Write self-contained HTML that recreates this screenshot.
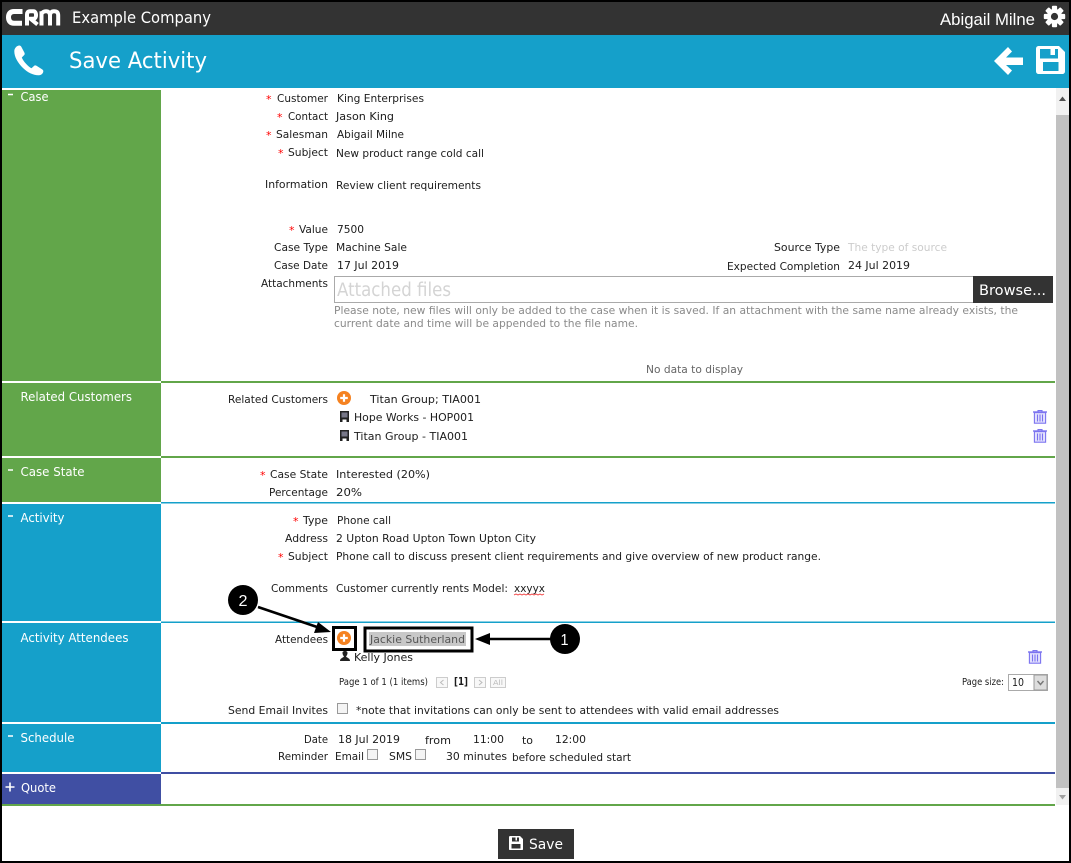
<!DOCTYPE html>
<html><head><meta charset="utf-8"><title>Save Activity</title>
<style>
html,body{margin:0;padding:0;background:#fff;width:1071px;height:863px;overflow:hidden}
svg{display:block}
text{font-family:"DejaVu Sans",sans-serif;font-size:11px;fill:#1c1c1c}
.s text{fill:#fff;font-size:12px}
.r{fill:#f00;font-size:11px}
</style></head><body>
<svg xmlns="http://www.w3.org/2000/svg" width="1071" height="863" viewBox="0 0 1071 863">
<defs>
<g id="plus"><circle r="7" fill="#f58220"/><path d="M-3.8 0H3.8M0-3.8V3.8" stroke="#fff" stroke-width="2.2"/></g>
<g id="trash" fill="none" stroke="#7b73f0" stroke-width="1.1"><path d="M0 2H14" stroke-width="1.4"/><path d="M5 2V.6H9V2"/><rect x="1.4" y="2.6" width="11.2" height="10.6" fill="#e3e1fd"/><path d="M4.500 4.500V11.500M7 4.500V11.500M9.500 4.500V11.500"/></g>
<g id="bld" fill="#222"><path d="M0 0H9V11H6.500V8.500H2.500V11H0Z"/><path d="M1.500 1.500H7.500V6.500H1.500Z" fill="#778"/></g>
<g id="cb"><rect x=".5" y=".5" width="10" height="10" fill="#f4f4f4" stroke="#999"/></g>
</defs>

<rect width="1071" height="863" fill="#000"/>
<rect x="2" y="2" width="1067" height="859" fill="#fff"/>
<rect x="2" y="2" width="1067" height="33" fill="#333"/>
<rect x="2" y="35" width="1067" height="53" fill="#15a0ca"/>

<!-- logo -->
<g fill="none" stroke="#fff" aria-label="CRM"><title>CRM</title>
<path d="M22.500 11.500H14C10 11.500 8.500 14 8.500 17.300S10 23.200 14 23.200H22" stroke-width="5"/>
<path d="M27 25.500V14.500C27 12.500 28 11.300 30 11.300H33.500C36.800 11.300 37 18.800 33.500 18.800H30.500L37.500 24.500" stroke-width="4"/>
<path d="M41.500 25.500V11.300M41.500 14C42.500 12 44 11.300 46 11.300C48.500 11.300 50 12.800 50 15.500V25.500M50 15.500C50 12.800 51.500 11.300 54 11.300C57 11.300 58.200 12.800 58.200 15.500V25.500" stroke-width="4"/>
</g>
<text x="72" y="23" textLength="139" lengthAdjust="spacingAndGlyphs" style="font-size:16px;fill:#fff">Example Company</text>
<text x="940" y="25" textLength="95" lengthAdjust="spacingAndGlyphs" style="font:16.500px 'Liberation Sans',sans-serif;fill:#fff">Abigail Milne</text>
<!-- gear -->
<g transform="translate(1054.500 16.500)"><g fill="#fff">
<circle r="7.600"/><rect x="-2.600" y="-10.700" width="5.200" height="21.400" rx="1"/><rect x="-2.600" y="-10.700" width="5.200" height="21.400" rx="1" transform="rotate(45)"/><rect x="-2.600" y="-10.700" width="5.200" height="21.400" rx="1" transform="rotate(90)"/><rect x="-2.600" y="-10.700" width="5.200" height="21.400" rx="1" transform="rotate(135)"/></g>
<circle r="3.600" fill="#333"/></g>

<!-- header -->
<path d="M19 45.500C16.500 46 14.500 48 14.300 51C14.200 57 18 63 23 68C28 73 34 75.500 39 75.200C41.500 75 43 73.500 43.300 71.500C43.400 70.500 43 70 42 69.300L36.500 65.800C35.500 65.200 34.600 65.300 33.800 66.100L31.500 68.300C28 66.500 23 61 21.800 57.500L24 55.300C24.800 54.500 24.900 53.600 24.400 52.600L21.300 46.800C20.800 45.800 20 45.300 19 45.500Z" fill="#fff"/>
<text x="69" y="68" textLength="138" lengthAdjust="spacingAndGlyphs" style="font-size:22.500px;fill:#fff">Save Activity</text>
<path d="M994 61L1008 47L1012 51.500L1006 57.500H1023V65H1006L1012 70.500L1008 75Z" fill="#fff"/>
<path fill="#fff" fill-rule="evenodd" d="M1039 46H1059L1065 52V71C1065 73 1064 74 1062 74H1039C1037 74 1036 73 1036 71V49C1036 47 1037 46 1039 46ZM1040 49V58.500H1058V49H1055V55H1050.500V49ZM1043 62V71H1058.500V62Z"/>

<!-- scrollbar -->
<rect x="1056" y="88" width="13" height="717" fill="#f1f1f1"/>
<rect x="1056" y="115" width="13" height="673" fill="#c1c1c1"/>
<path d="M1059 101L1062.500 96.500L1066 101Z" fill="#505050"/>
<path d="M1059 795L1062.500 799.500L1066 795Z" fill="#a0a0a0"/>

<!-- section bars -->
<rect x="2" y="90" width="159" height="291" fill="#62a64a"/>
<rect x="2" y="383" width="159" height="73" fill="#62a64a"/>
<rect x="2" y="458" width="159" height="44" fill="#62a64a"/>
<rect x="2" y="504" width="159" height="117" fill="#15a0ca"/>
<rect x="2" y="623" width="159" height="99" fill="#15a0ca"/>
<rect x="2" y="724" width="159" height="48" fill="#15a0ca"/>
<rect x="2" y="774" width="159" height="30" fill="#404fa3"/>
<rect x="161" y="381" width="894" height="2" fill="#62a64a"/>
<rect x="161" y="456" width="894" height="2" fill="#62a64a"/>
<rect x="161" y="502" width="894" height="1.500" fill="#15a0ca"/>
<rect x="161" y="621.500" width="894" height="1.500" fill="#15a0ca"/>
<rect x="161" y="722" width="894" height="2" fill="#15a0ca"/>
<rect x="161" y="772" width="894" height="2" fill="#404fa3"/>
<rect x="2" y="804" width="1053" height="2" fill="#62a64a"/>

<g class="s">
<path d="M8 94.500H13M8 470H13M8 516H13M8 736H13" stroke="#fff" stroke-width="1.600"/>
<path d="M5.500 787H14.500M10 782.500V791.500" stroke="#fff" stroke-width="1.600"/>
<text x="20.500" y="101" textLength="28" lengthAdjust="spacingAndGlyphs">Case</text>
<text x="20.500" y="401" textLength="111.500" lengthAdjust="spacingAndGlyphs">Related Customers</text>
<text x="20.500" y="476" textLength="64" lengthAdjust="spacingAndGlyphs">Case State</text>
<text x="20.500" y="522" textLength="44" lengthAdjust="spacingAndGlyphs">Activity</text>
<text x="20.500" y="642" textLength="108" lengthAdjust="spacingAndGlyphs">Activity Attendees</text>
<text x="20.500" y="742" textLength="54" lengthAdjust="spacingAndGlyphs">Schedule</text>
<text x="21" y="792" textLength="35" lengthAdjust="spacingAndGlyphs">Quote</text>
</g>

<!-- red asterisks -->
<text class="r" x="266" y="103">*</text><text class="r" x="277" y="121">*</text><text class="r" x="266" y="139">*</text><text class="r" x="278" y="157">*</text><text class="r" x="289" y="234">*</text><text class="r" x="260" y="479">*</text><text class="r" x="293" y="525">*</text><text class="r" x="278" y="561">*</text>

<!-- case -->
<text x="277" y="102" textLength="51" lengthAdjust="spacingAndGlyphs">Customer</text>
<text x="288" y="120" textLength="40" lengthAdjust="spacingAndGlyphs">Contact</text>
<text x="276" y="138" textLength="52" lengthAdjust="spacingAndGlyphs">Salesman</text>
<text x="288" y="156" textLength="40" lengthAdjust="spacingAndGlyphs">Subject</text>
<text x="265" y="188" textLength="63" lengthAdjust="spacingAndGlyphs">Information</text>
<text x="299" y="233" textLength="29" lengthAdjust="spacingAndGlyphs">Value</text>
<text x="274" y="251" textLength="54" lengthAdjust="spacingAndGlyphs">Case Type</text>
<text x="274" y="269" textLength="54" lengthAdjust="spacingAndGlyphs">Case Date</text>
<text x="261" y="287" textLength="67" lengthAdjust="spacingAndGlyphs">Attachments</text>
<text x="337" y="102" textLength="87" lengthAdjust="spacingAndGlyphs">King Enterprises</text>
<text x="336" y="120" textLength="58" lengthAdjust="spacingAndGlyphs">Jason King</text>
<text x="337" y="138" textLength="67" lengthAdjust="spacingAndGlyphs">Abigail Milne</text>
<text x="336" y="157" textLength="148" lengthAdjust="spacingAndGlyphs">New product range cold call</text>
<text x="336" y="189" textLength="145" lengthAdjust="spacingAndGlyphs">Review client requirements</text>
<text x="337" y="233" textLength="27" lengthAdjust="spacingAndGlyphs">7500</text>
<text x="336" y="251" textLength="71" lengthAdjust="spacingAndGlyphs">Machine Sale</text>
<text x="337" y="269" textLength="62" lengthAdjust="spacingAndGlyphs">17 Jul 2019</text>
<text x="774" y="251" textLength="66" lengthAdjust="spacingAndGlyphs">Source Type</text>
<text x="848" y="251" textLength="99" lengthAdjust="spacingAndGlyphs" style="fill:#ccc">The type of source</text>
<text x="727" y="270" textLength="113" lengthAdjust="spacingAndGlyphs">Expected Completion</text>
<text x="848" y="269" textLength="62" lengthAdjust="spacingAndGlyphs">24 Jul 2019</text>

<rect x="334.500" y="276.500" width="640" height="26" fill="#fff" stroke="#aaa"/>
<text x="337" y="296" textLength="114" lengthAdjust="spacingAndGlyphs" style="font-size:18.500px;fill:#d4d4d4">Attached files</text>
<rect x="973" y="276" width="80" height="27" fill="#333"/>
<text x="979" y="295" textLength="67" lengthAdjust="spacingAndGlyphs" style="font-size:14.500px;fill:#fff">Browse...</text>
<text x="334" y="314" textLength="684" lengthAdjust="spacingAndGlyphs" style="fill:#8a8a8a">Please note, new files will only be added to the case when it is saved. If an attachment with the same name already exists, the</text>
<text x="334" y="327" textLength="304" lengthAdjust="spacingAndGlyphs" style="fill:#8a8a8a">current date and time will be appended to the file name.</text>
<text x="646" y="373" textLength="97" lengthAdjust="spacingAndGlyphs" style="fill:#666">No data to display</text>

<!-- related customers -->
<text x="228" y="403" textLength="100" lengthAdjust="spacingAndGlyphs">Related Customers</text>
<use href="#plus" x="344" y="398"/>
<text x="370" y="403" textLength="111" lengthAdjust="spacingAndGlyphs">Titan Group; TIA001</text>
<use href="#bld" x="340" y="411"/>
<text x="354" y="421" textLength="120" lengthAdjust="spacingAndGlyphs">Hope Works - HOP001</text>
<use href="#bld" x="340" y="430"/>
<text x="354" y="440" textLength="114" lengthAdjust="spacingAndGlyphs">Titan Group - TIA001</text>
<use href="#trash" x="1033" y="410"/>
<use href="#trash" x="1033" y="429"/>

<!-- case state -->
<text x="270" y="478" textLength="58" lengthAdjust="spacingAndGlyphs">Case State</text>
<text x="336" y="478" textLength="94" lengthAdjust="spacingAndGlyphs">Interested (20%)</text>
<text x="269" y="496" textLength="59" lengthAdjust="spacingAndGlyphs">Percentage</text>
<text x="336" y="496" textLength="26" lengthAdjust="spacingAndGlyphs">20%</text>

<!-- activity -->
<text x="303" y="524" textLength="25" lengthAdjust="spacingAndGlyphs">Type</text>
<text x="337" y="524" textLength="54" lengthAdjust="spacingAndGlyphs">Phone call</text>
<text x="285" y="542" textLength="43" lengthAdjust="spacingAndGlyphs">Address</text>
<text x="336" y="542" textLength="200" lengthAdjust="spacingAndGlyphs">2 Upton Road Upton Town Upton City</text>
<text x="288" y="560" textLength="40" lengthAdjust="spacingAndGlyphs">Subject</text>
<text x="336" y="560" textLength="485" lengthAdjust="spacingAndGlyphs">Phone call to discuss present client requirements and give overview of new product range.</text>
<text x="271" y="592" textLength="57" lengthAdjust="spacingAndGlyphs">Comments</text>
<text x="336" y="592" textLength="172" lengthAdjust="spacingAndGlyphs">Customer currently rents Model:</text>
<text x="514" y="592" textLength="31" lengthAdjust="spacingAndGlyphs">xxyyx</text>
<path d="M514 595l2 -1 2 1 2 -1 2 1 2 -1 2 1 2 -1 2 1 2 -1 2 1 2 -1 2 1 2 -1 2 1 2 -1" fill="none" stroke="#e33" stroke-width=".8"/>

<!-- attendees -->
<text x="275" y="643" textLength="53" lengthAdjust="spacingAndGlyphs">Attendees</text>
<use href="#plus" x="344" y="638"/>
<rect x="333.500" y="627.500" width="22" height="22" fill="none" stroke="#000" stroke-width="3"/>
<rect x="365" y="628" width="107" height="23" fill="none" stroke="#000" stroke-width="3"/>
<rect x="369" y="632" width="97" height="14" fill="#c8c8c8"/>
<text x="370" y="643" textLength="95" lengthAdjust="spacingAndGlyphs" style="fill:#555">Jackie Sutherland</text>
<path d="M340 661C340 658 343 658 344 656.500C343 655.500 342.500 654 342.500 653C342.500 651.500 343.500 651 345 651S347.500 651.500 347.500 653C347.500 654 347 655.500 346 656.500C347 658 350 658 350 661Z" fill="#222"/>
<text x="354" y="661" textLength="59" lengthAdjust="spacingAndGlyphs">Kelly Jones</text>
<use href="#trash" x="1028" y="650"/>
<text x="339" y="685" textLength="89" lengthAdjust="spacingAndGlyphs" style="font-size:10px">Page 1 of 1 (1 items)</text>
<g fill="#f8f8f8" stroke="#ccc"><rect x="436.500" y="677.500" width="11" height="10"/><rect x="474.500" y="677.500" width="11" height="10"/><rect x="490.500" y="677.500" width="15" height="10"/></g>
<path d="M443.500 680L440.500 682.500L443.500 685M479 680L482 682.500L479 685" fill="none" stroke="#bbb"/>
<text x="493" y="685" textLength="10" lengthAdjust="spacingAndGlyphs" style="font-size:7px;fill:#bbb">All</text>
<text x="454" y="685" textLength="14" lengthAdjust="spacingAndGlyphs" style="font-weight:bold;font-size:10.500px">[1]</text>
<text x="962" y="685" textLength="42" lengthAdjust="spacingAndGlyphs" style="font-size:10px">Page size:</text>
<rect x="1008.500" y="674.500" width="39" height="16" fill="#fff" stroke="#aaa"/>
<text x="1012" y="686" textLength="12" lengthAdjust="spacingAndGlyphs">10</text>
<rect x="1034" y="675" width="13" height="15" fill="#ddd" stroke="#999"/>
<path d="M1037.500 681L1040.500 684.500L1043.500 681" fill="none" stroke="#777" stroke-width="1.400"/>
<text x="228" y="714" textLength="100" lengthAdjust="spacingAndGlyphs">Send Email Invites</text>
<use href="#cb" x="337" y="703"/>
<text x="356" y="714" textLength="423" lengthAdjust="spacingAndGlyphs">*note that invitations can only be sent to attendees with valid email addresses</text>

<!-- callouts -->
<circle cx="565" cy="639" r="15" fill="#000"/>
<text x="560.500" y="645" textLength="8" lengthAdjust="spacingAndGlyphs" style="font:16px 'Liberation Sans',sans-serif;fill:#fff">1</text>
<path d="M552 639H486" stroke="#000" stroke-width="2.600"/>
<path d="M475 639L490 633V645Z" fill="#000"/>
<circle cx="243" cy="600" r="15" fill="#000"/>
<text x="238.500" y="606" textLength="9" lengthAdjust="spacingAndGlyphs" style="font:16px 'Liberation Sans',sans-serif;fill:#fff">2</text>
<path d="M258 607L320 628" stroke="#000" stroke-width="2.600"/>
<path d="M331 632L314 633L318 622Z" fill="#000"/>

<!-- schedule -->
<text x="304" y="743" textLength="24" lengthAdjust="spacingAndGlyphs">Date</text>
<text x="338" y="743" textLength="62" lengthAdjust="spacingAndGlyphs">18 Jul 2019</text>
<text x="425" y="744" textLength="26" lengthAdjust="spacingAndGlyphs">from</text>
<text x="473" y="743" textLength="31" lengthAdjust="spacingAndGlyphs">11:00</text>
<text x="522" y="744" textLength="11" lengthAdjust="spacingAndGlyphs">to</text>
<text x="555" y="743" textLength="31" lengthAdjust="spacingAndGlyphs">12:00</text>
<text x="278" y="760" textLength="50" lengthAdjust="spacingAndGlyphs">Reminder</text>
<text x="335" y="760" textLength="29" lengthAdjust="spacingAndGlyphs">Email</text>
<use href="#cb" x="367" y="749"/>
<text x="389" y="760" textLength="23" lengthAdjust="spacingAndGlyphs">SMS</text>
<use href="#cb" x="415" y="749"/>
<text x="446" y="760" textLength="61" lengthAdjust="spacingAndGlyphs">30 minutes</text>
<text x="512" y="761" textLength="119" lengthAdjust="spacingAndGlyphs">before scheduled start</text>

<!-- save -->
<rect x="498" y="829" width="76" height="30" fill="#333"/>
<path fill="#fff" fill-rule="evenodd" d="M510 836H520L523 839V849C523 850 522.500 850 522 850H510C509.500 850 509 850 509 849V837C509 836.500 509.500 836 510 836ZM512 837.500V841.500H519V837.500H517V840.500H515.500V837.500ZM511.500 844V848.500H520.500V844Z"/>
<text x="529" y="849" textLength="34" lengthAdjust="spacingAndGlyphs" style="font-size:14.500px;fill:#fff">Save</text>
</svg>
</body></html>
